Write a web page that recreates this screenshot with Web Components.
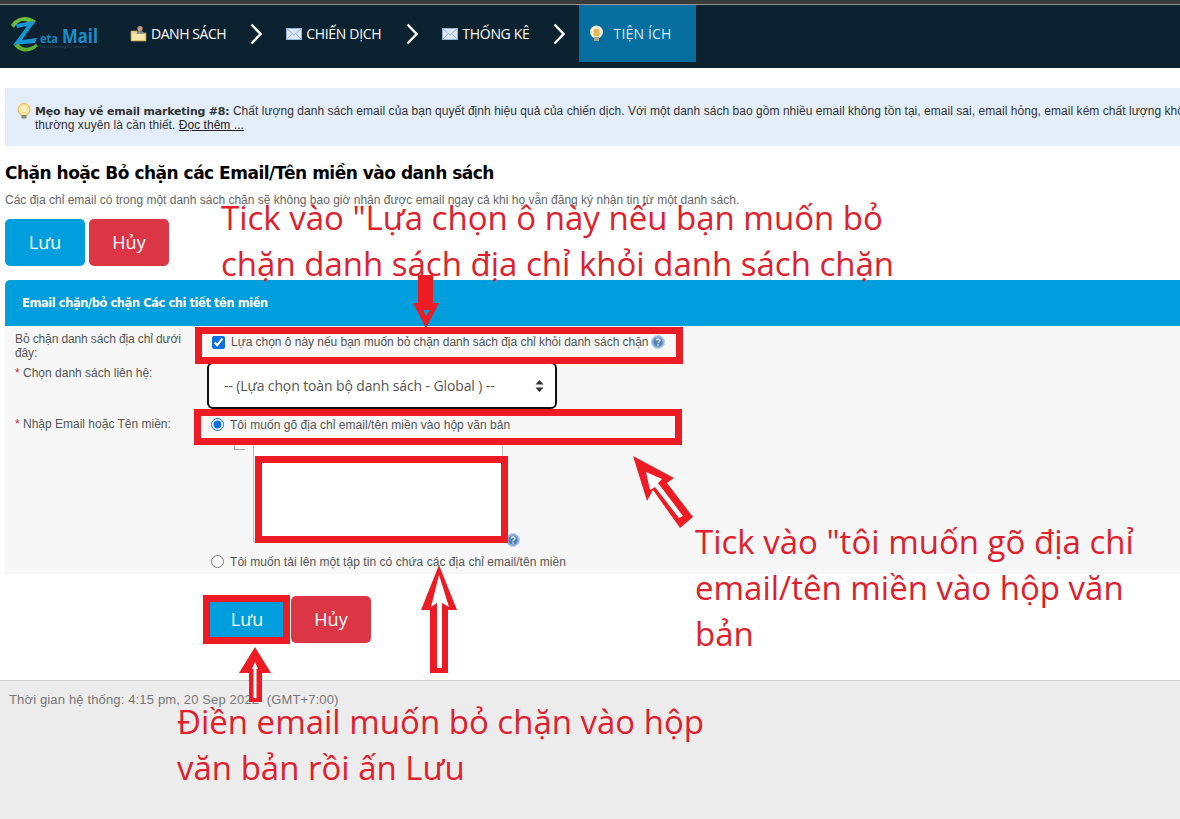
<!DOCTYPE html>
<html lang="vi">
<head>
<meta charset="utf-8">
<title>ZetaMail</title>
<style>
html, body { margin: 0; padding: 0; height: 100%; overflow: hidden; }
body { font-family: "Liberation Sans", sans-serif; background: #fff; position: relative; width: 1180px; height: 819px; }
app-page { height: 819px; }
</style>
</head>
<body>

<app-page>
    <main-nav></main-nav>
    <tip-box>
        <b>Mẹo hay về email marketing #8:</b> Chất lượng danh sách email của bạn quyết định hiệu quả của chiến dịch. Với một danh sách bao gồm nhiều email không tồn tại, email sai, email hỏng, email kém chất lượng không được làm sạch<br>thường xuyên là cần thiết. <a>Đọc thêm ...</a>
    </tip-box>
    <page-title heading="Chặn hoặc Bỏ chặn các Email/Tên miền vào danh sách">
        Các địa chỉ email có trong một danh sách chặn sẽ không bao giờ nhận được email ngay cả khi họ vẫn đăng ký nhận tin từ một danh sách.
    </page-title>
    <button-bar></button-bar>
    <block-form></block-form>
    <button-bar lower></button-bar>
    <page-footer>Thời gian hệ thống: 4:15 pm, 20 Sep 2022 &nbsp;(GMT+7:00)</page-footer>
</app-page>
<note-layer></note-layer>

<script>
class AppPage extends HTMLElement {
    constructor(){
        super();
        this.attachShadow({mode: "open"}).innerHTML = `
        <style>
        :host{
            display: flex;
            flex-direction: column;
            width: 1180px;
            overflow: hidden;
            font-family: "Liberation Sans", sans-serif;
        }
        </style>
        <slot></slot>`;
    }
}

class MainNav extends HTMLElement {
    constructor(){
        super();
        this.attachShadow({mode: "open"}).innerHTML = `
        <style>
        :host{
            display: block;
            flex: none;
            background: #0d2231;
            font-family: "Open Sans", sans-serif;
        }
        .strip{
            height: 5px;
            background: #3b3b3b;
            border-bottom: 1px solid #8d9296;
            box-sizing: border-box;
        }
        nav{
            display: flex;
            height: 63px;
            align-items: flex-start;
            padding-left: 9px;
        }
        .logo{
            width: 121px;
            height: 57px;
            flex: none;
        }
        .item{
            display: flex;
            align-items: center;
            height: 57px;
            color: #fff;
            font-size: 14px;
            letter-spacing: -0.3px;
            white-space: nowrap;
        }
        .item svg{
            margin-right: 4px;
        }
        .sep{
            height: 57px;
            display: flex;
            align-items: center;
            flex: none;
        }
        .active{
            background: #066f9f;
            color: #d4e9f3;
            padding: 0 25px 0 9px;
            letter-spacing: 0.15px;
        }
        .active svg{
            margin-right: 9px;
        }
        </style>
        <div class="strip"></div>
        <nav>
            <svg class="logo" viewBox="0 0 121 57">
                <path d="M2 20C6 13 17 8 27 16L23 19C16 14 9 15 5 23Z" fill="#6dbb3c"/>
                <path d="M7 19L25 16L26 18C20 24 17 30 13 35L28 33L26 38L4 40C9 33 14 27 18 21L8 23Z" fill="#1596d2"/>
                <path d="M5 40C10 48 21 49 29 41L27 39C20 44 13 44 10 39Z" fill="#5fb035"/>
                <text x="31" y="38" font-family="Open Sans" font-size="13" font-weight="700" fill="#1a86bd" textLength="18" lengthAdjust="spacingAndGlyphs">eta</text>
                <text x="53" y="38" font-family="Open Sans" font-size="20" font-weight="700" fill="#1a8fca" textLength="36" lengthAdjust="spacingAndGlyphs">Mail</text>
                <text x="31" y="43" font-family="Open Sans" font-size="3.5" fill="#33505f">Email marketing for business</text>
            </svg>
            <div class="item" style="letter-spacing:-0.45px">
                <svg width="17" height="17" viewBox="0 0 17 17">
                    <path d="M1 6h6l1 2h8v8H1Z" fill="#f0d98a" stroke="#b99a45" stroke-width=".7"/>
                    <circle cx="10" cy="3.5" r="2.6" fill="#c99a78"/>
                    <path d="M6 10c0-3 2-4 4-4s5 1 5 4Z" fill="#8a8f96"/>
                    <path d="M2 9h13v6H2Z" fill="#f6e6a8"/>
                </svg>
                DANH SÁCH
            </div>
            <div class="sep" style="padding:0 24px 0 24px"><nav-chevron></nav-chevron></div>
            <div class="item">
                <svg width="16" height="12" viewBox="0 0 16 12">
                    <rect x=".5" y=".5" width="15" height="11" fill="#dbe7f7" stroke="#9db7d8"/>
                    <path d="M1 1l7 6 7-6M1 11l5-5M15 11l-5-5" fill="none" stroke="#9db7d8"/>
                </svg>
                CHIẾN DỊCH
            </div>
            <div class="sep" style="padding:0 24px 0 25px"><nav-chevron></nav-chevron></div>
            <div class="item">
                <svg width="16" height="12" viewBox="0 0 16 12">
                    <rect x=".5" y=".5" width="15" height="11" fill="#dbe7f7" stroke="#9db7d8"/>
                    <path d="M1 1l7 6 7-6M1 11l5-5M15 11l-5-5" fill="none" stroke="#9db7d8"/>
                </svg>
                THỐNG KÊ
            </div>
            <div class="sep" style="padding:0 14px 0 23px"><nav-chevron></nav-chevron></div>
            <div class="item active">
                <svg width="17" height="17" viewBox="0 0 17 17">
                    <circle cx="8.5" cy="7" r="6.5" fill="#f4f1df"/>
                    <rect x="5.5" y="4" width="6" height="7" rx="1" fill="#eab64c"/>
                    <rect x="6" y="12" width="5" height="4" fill="#a7a488"/>
                </svg>
                TIỆN ÍCH
            </div>
        </nav>`;
    }
}

class NavChevron extends HTMLElement {
    constructor(){
        super();
        this.attachShadow({mode: "open"}).innerHTML = `
        <style>:host{display: block; width: 12px; height: 22px;} svg{display: block;}</style>
        <svg width="12" height="22" viewBox="0 0 12 22"><path d="M1.500 1.500L10.500 11L1.500 20.500" fill="none" stroke="#fff" stroke-width="2.4"/></svg>`;
    }
}

class HelpIcon extends HTMLElement {
    constructor(){
        super();
        this.attachShadow({mode: "open"}).innerHTML = `
        <style>:host{display: inline-block; width: 14px; height: 14px;} svg{display: block;}</style>
        <svg width="14" height="14" viewBox="0 0 14 14">
            <circle cx="7" cy="7" r="6.5" fill="#8fb4dc" stroke="#b9cfe8"/>
            <circle cx="7" cy="7" r="4.6" fill="#4f82bb"/>
            <path d="M5.3 5.6c0-2.2 3.6-2.200 3.600-.1 0 1.500-1.900 1.400-1.900 2.800" fill="none" stroke="#fff" stroke-width="1.300"/>
            <rect x="6.3" y="9.2" width="1.4" height="1.4" fill="#fff"/>
        </svg>`;
    }
}

class TipBox extends HTMLElement {
    constructor(){
        super();
        this.attachShadow({mode: "open"}).innerHTML = `
        <style>
        :host{
            display: block;
            flex: none;
            margin: 20px 0 0 5px;
            height: 58px;
            width: 1175px;
            box-sizing: border-box;
            background: #e4eefb;
            padding: 16px 0 0 11px;
            font-size: 12px;
            line-height: 14px;
            color: #333;
            overflow: hidden;
            position: relative;
            letter-spacing: 0.04px;
        }
        .text{
            padding-left: 19px;
            margin-left: 0;
            white-space: nowrap;
        }
        svg{
            position: absolute;
            left: 11px;
            top: 15px;
        }
        ::slotted(a){
            text-decoration: underline;
            color: #222;
        }
        ::slotted(b){
            color: #333;
            font: bold 11px "DejaVu Sans", sans-serif;
            letter-spacing: -0.2px;
        }
        </style>
        <svg width="16" height="16" viewBox="0 0 16 16">
            <circle cx="8" cy="6.5" r="6" fill="#f6e39a" stroke="#e0b955"/>
            <circle cx="8" cy="6" r="3" fill="#fff3c4"/>
            <rect x="5.5" y="12" width="5" height="3.5" fill="#8d8a78"/>
        </svg>
        <div class="text"><slot></slot></div>`;
    }
}

class PageTitle extends HTMLElement {
    static get observedAttributes(){ return ["heading"]; }
    constructor(){
        super();
        this.attachShadow({mode: "open"}).innerHTML = `
        <style>
        :host{
            display: block;
            flex: none;
            padding: 17px 0 0 5px;
        }
        h2{
            margin: 0;
            font: bold 17px/20px "DejaVu Sans", sans-serif;
            letter-spacing: -0.5px;
            color: #000;
        }
        p{
            margin: 10px 0 0;
            font-size: 12px;
            line-height: 14px;
            color: #666;
        }
        </style>
        <h2></h2>
        <p><slot></slot></p>`;
    }
    attributeChangedCallback(name, old, value){
        this.shadowRoot.querySelector("h2").textContent = value;
    }
}

class ButtonBar extends HTMLElement {
    constructor(){
        super();
        this.attachShadow({mode: "open"}).innerHTML = `
        <style>
        :host{
            display: flex;
            flex: none;
            gap: 4px;
            padding: 12px 0 14px 5px;
        }
        :host([lower]){
            padding: 22px 0 0 209px;
            gap: 6px;
        }
        button{
            width: 80px;
            height: 47px;
            border: 0;
            border-radius: 5px;
            color: #fff;
            font: 18px/24px "Open Sans", sans-serif;
            padding: 0 0 2px;
        }
        :host([lower]) .save{
            width: 76px;
            border-radius: 0;
        }
        .save{ background: #009edc; }
        .cancel{ background: #dc3545; }
        </style>
        <button class="save">Lưu</button>
        <button class="cancel">Hủy</button>`;
    }
}

class BlockForm extends HTMLElement {
    constructor(){
        super();
        this.attachShadow({mode: "open"}).innerHTML = `
        <style>
        :host{
            display: block;
            flex: none;
            margin-left: 5px;
            width: 1175px;
            font-size: 12px;
            color: #555;
        }
        header{
            background: #009edc;
            height: 46px;
            border-radius: 5px 0 0 0;
            display: flex;
            align-items: center;
            padding-left: 17px;
            color: #fff;
            font: bold 11.5px "DejaVu Sans", sans-serif;
            letter-spacing: -0.45px;
        }
        .body{
            background: #f7f7f7;
            height: 248px;
            display: grid;
            grid-template-columns: 190px 1fr;
            grid-template-rows: 36px 48px 1fr;
            line-height: 14px;
        }
        .label{
            padding: 6px 0 0 10px;
            color: #555;
        }
        .label i{
            color: #e0202a;
            font-style: normal;
        }
        .field{
            padding-left: 17px;
        }
        .check{
            display: flex;
            align-items: center;
            gap: 6px;
            padding-top: 8px;
            height: 16px;
            white-space: nowrap;
        }
        .check.typed{
            padding-top: 7px;
            letter-spacing: 0.04px;
        }
        .check.last{
            padding-top: 12px;
            letter-spacing: 0.05px;
        }
        .check.typed input, .check.last input{
            position: relative;
            top: -1px;
        }
        input[type=checkbox], input[type=radio]{
            margin: 0;
            width: 13px;
            height: 13px;
            flex: none;
            accent-color: #0a6fe0;
        }
        input[type=radio]{
            margin-left: -1px;
        }
        .pick{
            position: relative;
            width: 350px;
            margin-left: -5px;
        }
        select{
            display: block;
            width: 350px;
            height: 47px;
            padding: 0 24px 0 15px;
            box-sizing: border-box;
            border: 2px solid #111;
            border-radius: 6px;
            background: #fff;
            color: #555;
            font: 14px "Open Sans", sans-serif;
            letter-spacing: -0.12px;
            appearance: none;
        }
        .pick svg{
            position: absolute;
            right: 13px;
            top: 18px;
        }
        .box{
            display: flex;
            margin: 10px 0 0 22px;
            align-items: flex-start;
        }
        .tick{
            width: 11px;
            height: 7px;
            flex: none;
            border: solid #aaa;
            border-width: 0 0 1px 1px;
            box-sizing: border-box;
            margin-right: 8px;
        }
        textarea{
            display: block;
            width: 250px;
            height: 99px;
            box-sizing: border-box;
            border: 1px solid #bbb;
            border-width: 0 1px 1px;
            background: #fff;
            margin: 0;
            padding: 0;
            resize: none;
        }
        .box help-icon{
            align-self: flex-end;
            margin: 0 0 -5px 3px;
        }
        </style>
        <header>Email chặn/bỏ chặn Các chi tiết tên miền</header>
        <div class="body">
            <div class="label" style="letter-spacing:-0.12px">Bỏ chặn danh sách địa chỉ dưới đây:</div>
            <div class="field">
                <label class="check" style="letter-spacing:-0.03px">
                    <input type="checkbox" checked>
                    <span>Lựa chọn ô này nếu bạn muốn bỏ chặn danh sách địa chỉ khỏi danh sách chặn</span>
                    <help-icon style="margin-left:-3px"></help-icon>
                </label>
            </div>
            <div class="label" style="padding-top:4px"><i>*</i> Chọn danh sách liên hệ:</div>
            <div class="field">
                <div class="pick">
                    <select><option>-- (Lựa chọn toàn bộ danh sách - Global ) --</option></select>
                    <svg width="9" height="12" viewBox="0 0 9 12"><path d="M4.500 0L8.500 4.500H.5ZM4.500 12L.5 7.500H8.500Z" fill="#333"/></svg>
                </div>
            </div>
            <div class="label" style="padding-top:7px"><i>*</i> Nhập Email hoặc Tên miền:</div>
            <div class="field">
                <label class="check typed">
                    <input type="radio" name="mode" checked>
                    <span>Tôi muốn gõ địa chỉ email/tên miền vào hộp văn bản</span>
                </label>
                <div class="box">
                    <div class="tick"></div>
                    <textarea></textarea>
                    <help-icon></help-icon>
                </div>
                <label class="check last">
                    <input type="radio" name="mode">
                    <span>Tôi muốn tải lên một tập tin có chứa các địa chỉ email/tên miền</span>
                </label>
            </div>
        </div>`;
    }
}

class PageFooter extends HTMLElement {
    constructor(){
        super();
        this.attachShadow({mode: "open"}).innerHTML = `
        <style>
        :host{
            display: block;
            flex: 1;
            margin-top: 37px;
            min-height: 130px;
            background: #ececec;
            border-top: 1px solid #ccc;
            padding: 12px 0 0 9px;
            font-size: 13px;
            letter-spacing: 0.15px;
            line-height: 14px;
            color: #777;
        }
        </style>
        <slot></slot>`;
    }
}

// red marks drawn over the screenshot: free canvas, so absolute coordinates are the content
class NoteLayer extends HTMLElement {
    constructor(){
        super();
        this.attachShadow({mode: "open"}).innerHTML = `
        <style>
        :host{
            position: absolute;
            left: 0;
            top: 0;
            width: 1180px;
            height: 819px;
            pointer-events: none;
            font-family: "Open Sans", sans-serif;
            color: #e0202c;
        }
        svg{
            position: absolute;
            left: 0;
            top: 0;
        }
        .note{
            position: absolute;
            margin: 0;
            font-size: 33px;
            line-height: 46px;
            white-space: nowrap;
        }
        </style>
        <svg width="1180" height="819" viewBox="0 0 1180 819">
            <g fill="none" stroke="#ed1c24" stroke-width="7">
                <rect x="198.500" y="330.500" width="481" height="30"/>
                <rect x="197.500" y="412.500" width="481" height="29"/>
                <rect x="258.500" y="459.500" width="246" height="80"/>
                <rect x="206.500" y="598.500" width="80" height="42"/>
            </g>
            <g fill="#ed1c24">
                <path d="M418 275H433V303H439L426 328L413 303H418Z"/>
                <path d="M633 456L674 478L667 483L693 517L680 528L653 490L647 501Z"/>
                <path d="M439 565L457 610H448V673H430V610H421Z"/>
                <path d="M255 647L271 673H262V702H249V673H239Z"/>
            </g>
            <path d="M423 310H430L426 316Z" fill="#009edc"/>
            <g fill="#fff">
                <path d="M646 472L662 479L658 483L683 516L679 518L655 487L650 490Z"/>
                <path d="M439 575L449 607L442 603V668H437V603L431 607Z"/>
                <path d="M255 662L258 669H256.500V698H253.500V669H252Z"/>
            </g>
        </svg>
        <p class="note" style="left:221px;top:195px">Tick vào "Lựa chọn ô này nếu bạn muốn bỏ<br>chặn danh sách địa chỉ khỏi danh sách chặn</p>
        <p class="note" style="left:695px;top:519px">Tick vào "tôi muốn gõ địa chỉ<br>email/tên miền vào hộp văn<br>bản</p>
        <p class="note" style="left:177px;top:699px">Điền email muốn bỏ chặn vào hộp<br>văn bản rồi ấn Lưu</p>`;
    }
}

customElements.define("nav-chevron", NavChevron);
customElements.define("help-icon", HelpIcon);
customElements.define("app-page", AppPage);
customElements.define("main-nav", MainNav);
customElements.define("tip-box", TipBox);
customElements.define("page-title", PageTitle);
customElements.define("button-bar", ButtonBar);
customElements.define("block-form", BlockForm);
customElements.define("page-footer", PageFooter);
customElements.define("note-layer", NoteLayer);
</script>
</body>
</html>
